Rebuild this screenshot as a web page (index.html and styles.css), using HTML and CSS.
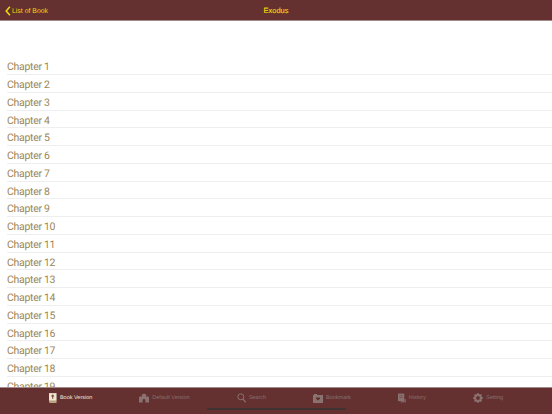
FILE: index.html
```html
<!DOCTYPE html>
<html lang="en">
<head>
<meta charset="utf-8">
<title>Exodus</title>
<link rel="stylesheet" href="styles.css">
</head>
<body>
<div class="app">
  <header class="nav">
    <a class="back">
      <svg class="chev" width="6" height="10" viewBox="0 0 6 10"><path d="M4.900 .7 1.200 5l3.700 4.300" fill="none" stroke="#f0dc0a" stroke-width="1.500"/></svg>
      <span class="back-label">List of Book</span>
    </a>
    <h1 class="title">Exodus</h1>
  </header>
  <main class="list">
    <div class="row">Chapter 1</div>
    <div class="row">Chapter 2</div>
    <div class="row">Chapter 3</div>
    <div class="row">Chapter 4</div>
    <div class="row">Chapter 5</div>
    <div class="row">Chapter 6</div>
    <div class="row">Chapter 7</div>
    <div class="row">Chapter 8</div>
    <div class="row">Chapter 9</div>
    <div class="row">Chapter 10</div>
    <div class="row">Chapter 11</div>
    <div class="row">Chapter 12</div>
    <div class="row">Chapter 13</div>
    <div class="row">Chapter 14</div>
    <div class="row">Chapter 15</div>
    <div class="row">Chapter 16</div>
    <div class="row">Chapter 17</div>
    <div class="row">Chapter 18</div>
    <div class="row">Chapter 19</div>
  </main>
  <footer class="tabs">
    <div class="tab active">
      <svg width="8" height="10" viewBox="0 0 9 11"><path d="M0 0h8.500v8.700H0z" fill="#f0e6d0"/><path d="M0 8.700h8.500V11H1.200C.5 11 0 10.400 0 9.800z" fill="#b9a27e"/><path d="M4.200 1.600v4.800M2.600 3.200h3.200" stroke="#5a2a28" stroke-width="1"/></svg>
      <span>Book Version</span>
    </div>
    <div class="tab">
      <svg width="10" height="10" viewBox="0 0 11 10"><path d="M0 10V4l1.500-1L3 4V1.500L5.500 0 8 1.500V4l1.500-1L11 4v6H7V7.500a1.500 1.500 0 0 0-3 0V10z" fill="#8a7270"/></svg>
      <span>Default Version</span>
    </div>
    <div class="tab">
      <svg width="9" height="10" viewBox="0 0 9 10"><circle cx="3.800" cy="3.800" r="3" fill="none" stroke="#8a7270" stroke-width="1"/><path d="m6 6 2.600 3.300" stroke="#8a7270" stroke-width="1.200"/></svg>
      <span>Search</span>
    </div>
    <div class="tab">
      <svg width="10" height="9" viewBox="0 0 10 9"><path d="M0 9V1h1V0h3v1h6v8z" fill="#8a7270"/><path d="M3 3.500h4v1.200L5 6.500 3 4.700z" fill="#5e2e2c"/></svg>
      <span>Bookmark</span>
    </div>
    <div class="tab">
      <svg width="8" height="10" viewBox="0 0 9 10"><path d="M0 0h7v8.500H0z" fill="#8a7270"/><path d="M7 6h2v4H3V8.500h4z" fill="#7a5f5d"/><path d="M1.500 2.500h4M1.500 4.500h4" stroke="#6b4745" stroke-width=".7"/></svg>
      <span>History</span>
    </div>
    <div class="tab">
      <svg width="10" height="10" viewBox="0 0 10 10"><circle cx="5" cy="5" r="2.900" fill="none" stroke="#8a7270" stroke-width="2"/><path d="M5 0v2M5 8v2M0 5h2M8 5h2M1.500 1.500l1.400 1.400M7.100 7.100l1.400 1.400M8.500 1.500 7.100 2.900M2.900 7.100 1.500 8.500" stroke="#8a7270" stroke-width="1.500"/></svg>
      <span>Setting</span>
    </div>
    <div class="home"></div>
  </footer>
</div>
</body>
</html>
```
FILE: styles.css
```css
* { box-sizing: border-box; }
html, body { margin: 0; height: 100%; }
body { font-family: "Liberation Sans", Arial, sans-serif; background: #fff; overflow: hidden; text-rendering: geometricPrecision; }
.app { height: 414px; display: flex; flex-direction: column; }
.nav {
  height: 21px; flex: none; background: #653030; border-bottom: 1px solid #a58a8a;
  display: flex; align-items: center; justify-content: center; position: relative;
}
.back {
  position: absolute; left: 5px; top: 0; height: 21px; display: flex; align-items: center; gap: 1px;
  color: #f0dc0a; font-size: 6.900px;
}
.back-label { padding-top: 2px; }
.chev { display: block; }
.title { margin: 0; color: #f0dc0a; font-size: 7.500px; font-weight: 400; -webkit-text-stroke: 0.1px #f0dc0a; }
.list { flex: 1; min-height: 0; overflow: hidden; padding-top: 36.250px; }
.row {
  height: 17.750px; margin-left: 7px; border-bottom: 0.500px solid #eeeeee;
  color: #9c8654; font-family: Roboto, "Liberation Sans", sans-serif; font-size: 10.500px; letter-spacing: -0.300px; line-height: 19px; white-space: nowrap;
}
.tabs {
  height: 27px; flex: none; background: #653030; border-top: 1px solid #a58a8a;
  display: flex; justify-content: center; position: relative; padding-top: 5px; gap: 47px;
}
.tab {
  display: flex; align-items: center; gap: 3px; height: 10px;
  color: #85706e; font-size: 5.500px;
}
.tab svg { display: block; flex: none; }
.tab span { white-space: nowrap; }
.tab.active { color: #efe6d8; }
.home {
  position: absolute; left: 207px; top: 20px; width: 139px; height: 2px;
  background: #3f3331; border-radius: 1px;
}
```
